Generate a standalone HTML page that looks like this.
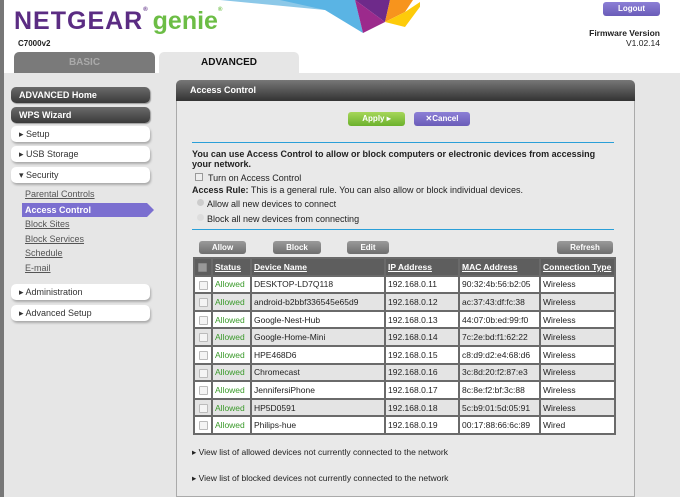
<!DOCTYPE html>
<html><head><style>
*{margin:0;padding:0;box-sizing:border-box}
body{width:680px;height:497px;overflow:hidden;background:#fff;font-family:"Liberation Sans",Arial,sans-serif;font-size:9px;color:#222;position:relative}
.a{position:absolute}
.sb{position:absolute;left:11px;width:139px;height:16px;border-radius:5px;font-weight:bold;font-size:9px;line-height:16px;padding-left:8px}
.dk{background:linear-gradient(#6a6a6a,#3a3a3a);color:#fff;box-shadow:1px 1px 1px #999}
.lt{background:#fff;color:#333;box-shadow:1px 2px 2px #aaa;font-weight:normal}
.sub{position:absolute;left:25px;color:#555;text-decoration:underline;font-size:9px}
.btn{position:absolute;height:13px;border-radius:3px;background:linear-gradient(#9a9a9a,#6e6e6e);color:#fff;font-weight:bold;font-size:8px;text-align:center;line-height:13px}
table{position:absolute;left:193px;top:257px;width:421px;table-layout:fixed;border-collapse:collapse;font-size:8.5px}
tr{height:17.6px}
td{border:2px solid #6a6a6a;padding:0 0 0 2px;white-space:nowrap;overflow:hidden;line-height:12px}
th{border:2px solid #6a6a6a;background:#5e5e5e;color:#fff;text-decoration:underline;text-align:left;padding:0 0 0 2px;white-space:nowrap;overflow:hidden;font-size:8.5px;line-height:12px}
tr:nth-child(odd) td{background:#e4e4e4}
tr:nth-child(even) td{background:#fff}
.g{color:#3a9a2a}
.cb{display:inline-block;width:9px;height:9px;border:1px solid #bbb;background:#f4f4f4;border-radius:1px;margin-left:2px;vertical-align:middle}
</style></head><body>
<svg class="a" style="left:220px;top:0" width="200" height="34">
<polygon points="0,0 130,0 105,10" fill="#8cc8e8"/>
<polygon points="60,0 135,0 143,33 105,10" fill="#5ab4e4"/>
<polygon points="135,0 170,0 165,22" fill="#6e2a8a"/>
<polygon points="135,0 165,22 143,33" fill="#9c2a8c"/>
<polygon points="170,0 193,0 185,12 165,22" fill="#f7941d"/>
<polygon points="165,22 185,12 203,0 205,0 185,27" fill="#fdcb0a"/>
</svg>
<div class="a" style="left:14px;top:7px;font-size:25px;font-weight:bold;color:#5b2c83;letter-spacing:1px;white-space:nowrap">NETGEAR<span style="font-size:6px;vertical-align:top">®</span><span style="color:#6cbd45;letter-spacing:0;margin-left:4px">genie</span><span style="font-size:6px;vertical-align:top;color:#6cbd45">®</span></div>
<div class="a" style="left:18px;top:39px;font-size:8px;font-weight:bold">C7000v2</div>
<div class="a" style="left:603px;top:2px;width:57px;height:14px;border-radius:3px;background:linear-gradient(#8c7fd6,#6a5cb8);color:#fff;font-weight:bold;font-size:8px;text-align:center;line-height:14px">Logout</div>
<div class="a" style="right:20px;top:28px;font-size:8.5px;font-weight:bold;text-align:right;line-height:10px">Firmware Version<br><span style="font-weight:normal">V1.02.14</span></div>
<div class="a" style="left:0;top:73px;width:680px;height:424px;background:#e6e6e6"></div>
<div class="a" style="left:0;top:0;width:4px;height:497px;background:#777"></div>
<div class="a" style="left:14px;top:52px;width:141px;height:21px;background:#7a7a7a;border-radius:5px 5px 0 0;color:#aaa;font-weight:bold;font-size:10px;text-align:center;line-height:21px">BASIC</div>
<div class="a" style="left:159px;top:52px;width:140px;height:21px;background:#e6e6e6;border-radius:5px 5px 0 0;color:#111;font-weight:bold;font-size:10px;text-align:center;line-height:21px">ADVANCED</div>
<div class="sb dk" style="top:87px">ADVANCED Home</div>
<div class="sb dk" style="top:107px">WPS Wizard</div>
<div class="sb lt" style="top:126px">▸ Setup</div>
<div class="sb lt" style="top:146px">▸ USB Storage</div>
<div class="sb lt" style="top:167px">▾ Security</div>
<div class="sub" style="top:189px">Parental Controls</div>
<div class="a" style="left:22px;top:203px;width:125px;height:14px;background:#7b6fd0"></div>
<div class="a" style="left:147px;top:203px;width:0;height:0;border-left:7px solid #7b6fd0;border-top:7px solid transparent;border-bottom:7px solid transparent"></div>
<div class="a" style="left:25px;top:205px;color:#fff;font-weight:bold;font-size:9px">Access Control</div>
<div class="sub" style="top:219px">Block Sites</div>
<div class="sub" style="top:234px">Block Services</div>
<div class="sub" style="top:248px">Schedule</div>
<div class="sub" style="top:263px">E-mail</div>
<div class="sb lt" style="top:284px">▸ Administration</div>
<div class="sb lt" style="top:305px">▸ Advanced Setup</div>
<div class="a" style="left:176px;top:80px;width:459px;height:417px;border:1px solid #aaa;border-top:none;background:#e9e9e9;border-radius:5px 5px 0 0"></div>
<div class="a" style="left:176px;top:80px;width:459px;height:21px;background:linear-gradient(#777,#333);border-radius:5px 5px 0 0;color:#fff;font-weight:bold;font-size:9px;line-height:21px;padding-left:14px">Access Control</div>
<div class="a" style="left:348px;top:112px;width:57px;height:14px;border-radius:3px;background:linear-gradient(#a6d65a,#6cb12c);color:#fff;font-weight:bold;font-size:8px;text-align:center;line-height:14px">Apply ▸</div>
<div class="a" style="left:414px;top:112px;width:56px;height:14px;border-radius:3px;background:linear-gradient(#8c7fd6,#6a5cb8);color:#fff;font-weight:bold;font-size:8px;text-align:center;line-height:14px">✕Cancel</div>
<div class="a" style="left:192px;top:142px;width:422px;height:1px;background:#2a9fd8"></div>
<div class="a" style="left:192px;top:149px;width:420px;font-weight:bold;font-size:9px;line-height:10px">You can use Access Control to allow or block computers or electronic devices from accessing your network.</div>
<div class="a" style="left:195px;top:173px;width:8px;height:8px;border:1px solid #999;background:#eee"></div>
<div class="a" style="left:208px;top:173px">Turn on Access Control</div>
<div class="a" style="left:192px;top:185px"><b>Access Rule:</b> This is a general rule. You can also allow or block individual devices.</div>
<div class="a" style="left:197px;top:199px;width:7px;height:7px;border-radius:50%;background:#ccc"></div>
<div class="a" style="left:207px;top:199px">Allow all new devices to connect</div>
<div class="a" style="left:197px;top:214px;width:7px;height:7px;border-radius:50%;background:#ddd"></div>
<div class="a" style="left:207px;top:214px">Block all new devices from connecting</div>
<div class="a" style="left:192px;top:229px;width:422px;height:1px;background:#2a9fd8"></div>
<div class="btn" style="left:199px;top:241px;width:47px">Allow</div>
<div class="btn" style="left:273px;top:241px;width:48px">Block</div>
<div class="btn" style="left:347px;top:241px;width:42px">Edit</div>
<div class="btn" style="left:557px;top:241px;width:56px">Refresh</div>
<table>
<colgroup><col style="width:18px"><col style="width:39px"><col style="width:134px"><col style="width:74px"><col style="width:81px"><col style="width:75px"></colgroup>
<tr><th><span class="cb" style="background:#999;border-color:#888;margin-left:1px"></span></th><th>Status</th><th>Device Name</th><th>IP Address</th><th>MAC Address</th><th>Connection Type</th></tr>
<tr><td><span class="cb"></span></td><td class="g">Allowed</td><td>DESKTOP-LD7Q118</td><td>192.168.0.11</td><td>90:32:4b:56:b2:05</td><td>Wireless</td></tr>
<tr><td><span class="cb"></span></td><td class="g">Allowed</td><td>android-b2bbf336545e65d9</td><td>192.168.0.12</td><td>ac:37:43:df:fc:38</td><td>Wireless</td></tr>
<tr><td><span class="cb"></span></td><td class="g">Allowed</td><td>Google-Nest-Hub</td><td>192.168.0.13</td><td>44:07:0b:ed:99:f0</td><td>Wireless</td></tr>
<tr><td><span class="cb"></span></td><td class="g">Allowed</td><td>Google-Home-Mini</td><td>192.168.0.14</td><td>7c:2e:bd:f1:62:22</td><td>Wireless</td></tr>
<tr><td><span class="cb"></span></td><td class="g">Allowed</td><td>HPE468D6</td><td>192.168.0.15</td><td>c8:d9:d2:e4:68:d6</td><td>Wireless</td></tr>
<tr><td><span class="cb"></span></td><td class="g">Allowed</td><td>Chromecast</td><td>192.168.0.16</td><td>3c:8d:20:f2:87:e3</td><td>Wireless</td></tr>
<tr><td><span class="cb"></span></td><td class="g">Allowed</td><td>JennifersiPhone</td><td>192.168.0.17</td><td>8c:8e:f2:bf:3c:88</td><td>Wireless</td></tr>
<tr><td><span class="cb"></span></td><td class="g">Allowed</td><td>HP5D0591</td><td>192.168.0.18</td><td>5c:b9:01:5d:05:91</td><td>Wireless</td></tr>
<tr><td><span class="cb"></span></td><td class="g">Allowed</td><td>Philips-hue</td><td>192.168.0.19</td><td>00:17:88:66:6c:89</td><td>Wired</td></tr>
</table>
<div class="a" style="left:192px;top:447px;font-size:8.5px">▸ View list of allowed devices not currently connected to the network</div>
<div class="a" style="left:192px;top:473px;font-size:8.5px">▸ View list of blocked devices not currently connected to the network</div>
</body></html>
